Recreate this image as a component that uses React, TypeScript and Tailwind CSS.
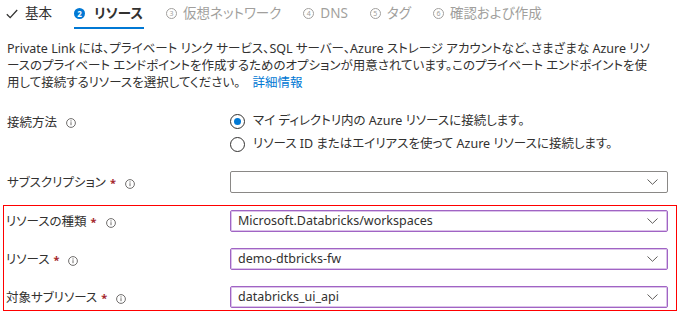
const font = "[font-family:'Noto_Sans','Noto_Sans_CJK_JP',sans-serif] [font-feature-settings:'palt']"

function CheckMark() {
  return (
    <svg width="12" height="10" viewBox="0 0 12 10" className="shrink-0">
      <polyline points="0.8,5.2 4.2,8.6 11.2,1" fill="none" stroke="#323130" strokeWidth="1.3" />
    </svg>
  )
}

function InfoIcon() {
  return (
    <svg width="10" height="10" viewBox="0 0 10 10" className="shrink-0">
      <circle cx="5" cy="5" r="4.4" fill="none" stroke="#605e5c" strokeWidth="0.9" />
      <line x1="5" y1="4.2" x2="5" y2="7.2" stroke="#605e5c" strokeWidth="0.9" />
      <circle cx="5" cy="2.9" r="0.55" fill="#605e5c" />
    </svg>
  )
}

function Chevron() {
  return (
    <svg width="11" height="6" viewBox="0 0 11 6" className="shrink-0">
      <polyline points="0.5,0.5 5.5,5.3 10.5,0.5" fill="none" stroke="#605e5c" strokeWidth="1" />
    </svg>
  )
}

function StepNum({ n, active }: { n: number; active?: boolean }) {
  if (active) {
    return (
      <span className="flex h-[11px] w-[11px] items-center justify-center rounded-full bg-[#0078d4] text-[8px] font-bold leading-none text-white">
        {n}
      </span>
    )
  }
  return (
    <span className="flex h-[11px] w-[11px] items-center justify-center rounded-full border border-[#a19f9d] text-[7px] leading-none text-[#a19f9d]">
      {n}
    </span>
  )
}

function Label({ text, required }: { text: string; required?: boolean }) {
  return (
    <div className="flex items-center pt-[3px] text-[12.5px] text-[#323130]">
      <span>{text}</span>
      {required && <span className="ml-[4px] text-[11px] font-bold text-[#a4262c]">*</span>}
      <span className="ml-[9px] flex">
        <InfoIcon />
      </span>
    </div>
  )
}

function Select({ value, highlight }: { value?: string; highlight?: boolean }) {
  return (
    <div
      className={
        highlight
          ? 'flex h-[22px] items-center justify-between rounded-[2px] border border-[#a064c4] pl-[7px] pr-[9px] text-[12.5px] text-[#323130] shadow-[inset_0_0_0_1px_#dcc3ea]'
          : 'flex h-[22px] items-center justify-between rounded-[2px] border border-[#8a8886] pl-[7px] pr-[9px] text-[12.5px] text-[#323130]'
      }
    >
      <span>{value}</span>
      <Chevron />
    </div>
  )
}

export default function App() {
  const tabs = [
    { n: 3, label: '仮想ネットワーク' },
    { n: 4, label: 'DNS' },
    { n: 5, label: 'タグ' },
    { n: 6, label: '確認および作成' },
  ]

  return (
    <div className={`h-[311px] w-[679px] overflow-hidden bg-white pl-[7px] pr-[11px] ${font}`}>
      {/* Tabs */}
      <div className="-ml-[1px] flex gap-[22px] text-[13.5px]">
        <div className="flex h-[29px] items-center gap-[7px] border-b-2 border-transparent text-[#323130]">
          <CheckMark />
          <span>基本</span>
        </div>
        <div className="flex h-[29px] items-center gap-[9px] border-b-2 border-[#0078d4] pr-[1px] font-bold text-[#323130]">
          <StepNum n={2} active />
          <span>リソース</span>
        </div>
        {tabs.map((t) => (
          <div key={t.n} className="flex h-[29px] items-center gap-[6px] border-b-2 border-transparent text-[#a19f9d]">
            <StepNum n={t.n} />
            <span>{t.label}</span>
          </div>
        ))}
      </div>

      {/* Description */}
      <div className="mt-[11px] whitespace-nowrap text-[12.5px] leading-[17px] text-[#323130]">
        <div>Private Link には、プライベート リンク サービス、SQL サーバー、Azure ストレージ アカウントなど、さまざまな Azure リソ</div>
        <div>ースのプライベート エンドポイントを作成するためのオプションが用意されています。このプライベート エンドポイントを使</div>
        <div>
          用して接続するリソースを選択してください。
          <span className="ml-[12px] text-[#0078d4]">詳細情報</span>
        </div>
      </div>

      {/* Connection method */}
      <div className="mt-[19px] grid grid-cols-[223px_1fr]">
        <div className="pt-[1px]">
          <Label text="接続方法" />
        </div>
        <div className="flex flex-col text-[12.5px] text-[#323130]">
          <div className="flex h-[23px] items-center gap-[8px]">
            <span className="flex h-[15px] w-[15px] items-center justify-center rounded-full border border-[#323130]">
              <span className="h-[7px] w-[7px] rounded-full bg-[#0078d4]" />
            </span>
            <span>マイ ディレクトリ内の Azure リソースに接続します。</span>
          </div>
          <div className="flex h-[23px] items-center gap-[8px]">
            <span className="h-[15px] w-[15px] rounded-full border border-[#323130]" />
            <span>リソース ID またはエイリアスを使って Azure リソースに接続します。</span>
          </div>
        </div>
      </div>

      {/* Subscription */}
      <div className="mt-[15px] grid grid-cols-[223px_1fr] items-center">
        <Label text="サブスクリプション" required />
        <Select />
      </div>

      {/* Highlighted group */}
      <div className="-ml-[4px] -mr-[9px] mt-[12px] flex flex-col gap-[16px] border border-[#ff0000] pb-[2px] pl-[2px] pr-[8px] pt-[4px]">
        <div className="grid grid-cols-[224px_1fr] items-center">
          <Label text="リソースの種類" required />
          <Select value="Microsoft.Databricks/workspaces" highlight />
        </div>
        <div className="grid grid-cols-[224px_1fr] items-center">
          <Label text="リソース" required />
          <Select value="demo-dtbricks-fw" highlight />
        </div>
        <div className="grid grid-cols-[224px_1fr] items-center">
          <Label text="対象サブリソース" required />
          <Select value="databricks_ui_api" highlight />
        </div>
      </div>
    </div>
  )
}
